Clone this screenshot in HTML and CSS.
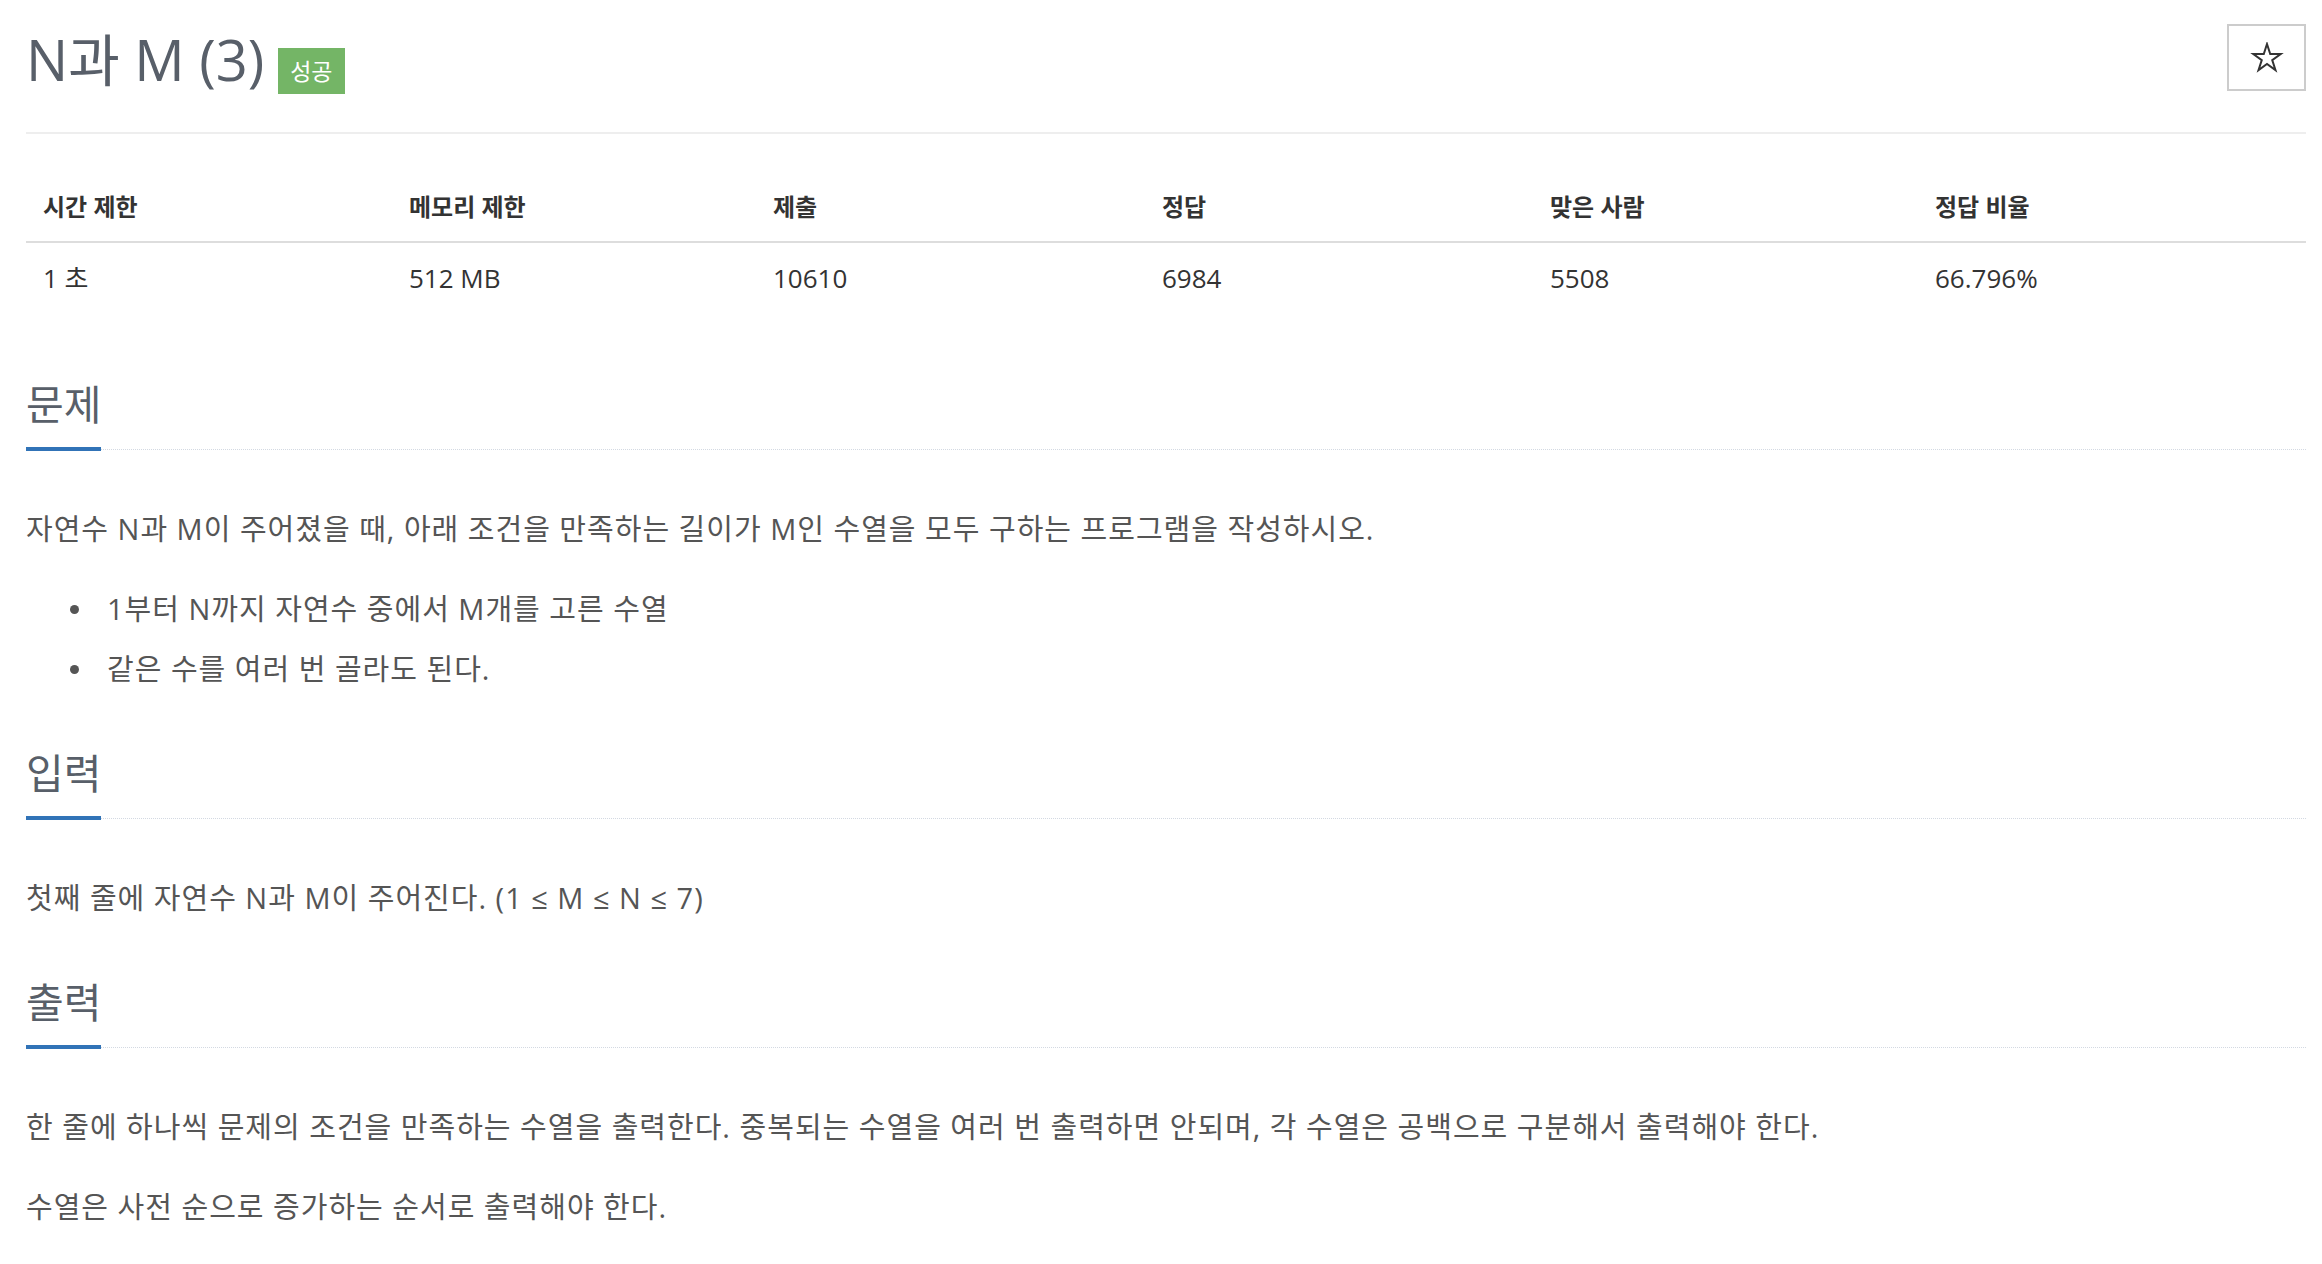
FILE: index.html
```html
<!DOCTYPE html>
<html lang="ko">
<head>
<meta charset="utf-8">
<title>N과 M (3)</title>
<link rel="stylesheet" href="styles.css">
</head>
<body>
<div class="page">
  <div class="page-header">
    <div class="title-wrap">
      <h1 class="title">N과 M (3)</h1>
      <span class="badge">성공</span>
    </div>
    <div class="star-btn">
      <svg class="star" width="34" height="32" viewBox="-2 -2 34 32">
        <polygon points="15,0 18.23,9.95 28.7,9.95 20.23,16.1 23.46,26.05 15,19.9 6.54,26.05 9.77,16.1 1.3,9.95 11.77,9.95" />
      </svg>
    </div>
  </div>

  <table class="info">
    <colgroup>
      <col class="c1"><col class="c2"><col class="c3"><col class="c4"><col class="c5"><col class="c6">
    </colgroup>
    <thead>
      <tr><th>시간 제한</th><th>메모리 제한</th><th>제출</th><th>정답</th><th>맞은 사람</th><th>정답 비율</th></tr>
    </thead>
    <tbody>
      <tr><td>1 초</td><td>512 MB</td><td>10610</td><td>6984</td><td>5508</td><td>66.796%</td></tr>
    </tbody>
  </table>

  <section class="section">
    <div class="headline"><h2>문제</h2></div>
    <p>자연수 N과 M이 주어졌을 때, 아래 조건을 만족하는 길이가 M인 수열을 모두 구하는 프로그램을 작성하시오.</p>
    <ul>
      <li>1부터 N까지 자연수 중에서 M개를 고른 수열</li>
      <li>같은 수를 여러 번 골라도 된다.</li>
    </ul>
  </section>

  <section class="section">
    <div class="headline"><h2>입력</h2></div>
    <p>첫째 줄에 자연수 N과 M이 주어진다. (1 ≤ M ≤ N ≤ 7)</p>
  </section>

  <section class="section">
    <div class="headline"><h2>출력</h2></div>
    <p>한 줄에 하나씩 문제의 조건을 만족하는 수열을 출력한다. 중복되는 수열을 여러 번 출력하면 안되며, 각 수열은 공백으로 구분해서 출력해야 한다.</p>
    <p>수열은 사전 순으로 증가하는 순서로 출력해야 한다.</p>
  </section>
</div>
</body>
</html>
```

FILE: styles.css
```css
html, body {
  margin: 0;
  padding: 0;
  background: #fff;
}

body {
  font-family: "Open Sans", "Noto Sans CJK KR", sans-serif;
  color: #555;
}

.page {
  padding: 0 16px 0 26px;
}

.page-header {
  display: flex;
  justify-content: space-between;
  align-items: flex-start;
  padding-top: 24px;
  padding-bottom: 38px;
  border-bottom: 2px solid #eee;
}

.title-wrap {
  display: flex;
  align-items: flex-start;
  gap: 14px;
}

.title {
  margin: 0;
  font-size: 56px;
  line-height: 70px;
  font-weight: 400;
  color: #585f69;
}

.badge {
  margin-top: 24px;
  height: 46px;
  padding: 0 12px;
  font-size: 23px;
  line-height: 46px;
  background: #74b566;
  color: #fff;
}

.star-btn {
  box-sizing: border-box;
  width: 79px;
  height: 67px;
  border: 2px solid #ccc;
  display: flex;
  align-items: center;
  justify-content: center;
}

.star polygon {
  fill: none;
  stroke: #333;
  stroke-width: 2;
  stroke-linejoin: miter;
}

.info {
  width: 100%;
  table-layout: fixed;
  border-collapse: collapse;
  margin-top: 45px;
  margin-bottom: 66px;
}

.info .c1 { width: 366px; }
.info .c2 { width: 364px; }
.info .c3 { width: 389px; }
.info .c4 { width: 388px; }
.info .c5 { width: 385px; }

.info th {
  text-align: left;
  padding: 13px 17px 19px;
  line-height: 30px;
  font-size: 24px;
  font-weight: 700;
  color: #333;
  border-bottom: 2px solid #ddd;
}

.info td {
  padding: 18px 17px;
  line-height: 34px;
  font-size: 26px;
  color: #333;
}

.section {
  margin-bottom: 59px;
}

.headline {
  display: flex;
  border-bottom: 1px dotted #d3d9e2;
  margin-bottom: 59px;
}

.headline h2 {
  margin: 0 0 -2px 0;
  font-size: 41px;
  line-height: 50px;
  font-weight: 400;
  color: #585f69;
  padding-bottom: 18px;
  border-bottom: 4px solid #3173b7;
}

.section p {
  margin: 0 0 40px 0;
  font-size: 29px;
  line-height: 40px;
  letter-spacing: 1px;
}

.section ul {
  margin: 0;
  padding-left: 81px;
  list-style: none;
}

.section li {
  position: relative;
  font-size: 29px;
  line-height: 40px;
  letter-spacing: 1px;
  margin-bottom: 20px;
}

.section li::before {
  content: "";
  position: absolute;
  left: -37px;
  top: 16px;
  width: 9px;
  height: 9px;
  border-radius: 50%;
  background: #555;
}

.section > :last-child,
.section li:last-child {
  margin-bottom: 0;
}
```
